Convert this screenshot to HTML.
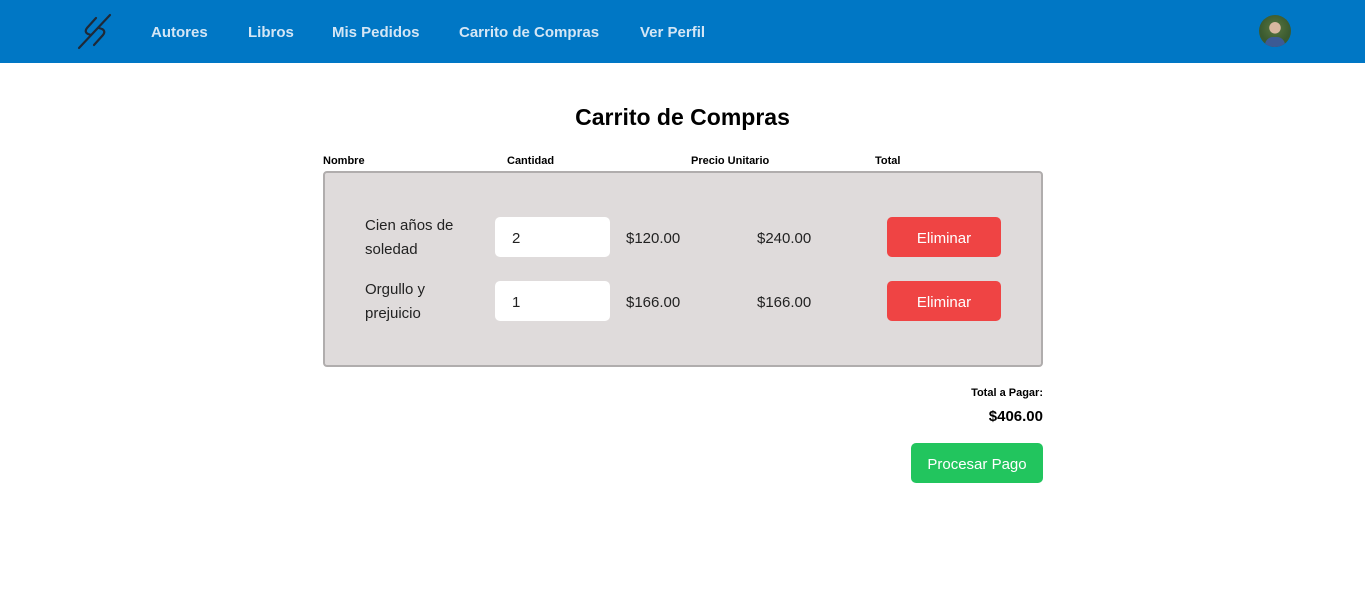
<!DOCTYPE html>
<html><head><meta charset="utf-8"><style>
*{margin:0;padding:0;box-sizing:border-box}
body{width:1365px;height:592px;background:#fff;font-family:"Liberation Sans",sans-serif;position:relative;overflow:hidden;color:#111}
.nav{position:absolute;left:0;top:0;width:1365px;height:63px;background:#0077c5}
.nav a{position:absolute;top:24px;color:#d4e6f5;font-weight:bold;font-size:15px;text-decoration:none}
.abs{position:absolute}
.h{position:absolute;top:155px;font-size:11px;font-weight:bold;color:#000}
.box{position:absolute;left:323px;top:171px;width:720px;height:196px;background:#dfdbdb;border:2px solid #b0adad;border-radius:4px}
.t{position:absolute;font-size:15px;color:#222;line-height:24px}
.inp{position:absolute;left:495px;width:115px;height:40px;background:#fff;border-radius:5px;font-size:15px;padding:13px 0 0 17px;color:#222}
.btn{position:absolute;color:#fff;font-size:15px;text-align:center;border-radius:5px;padding-top:3px}
</style></head><body>
<div class="nav">
<svg class="abs" style="left:76px;top:12px" width="38" height="38" viewBox="0 0 38 38" fill="none" stroke="#1f2937" stroke-width="2.2" stroke-linecap="round" stroke-linejoin="round">
<path d="M3 36 L34 3"/><path d="M20 6 L11 16 Q8 20 12 22 L15 23"/><path d="M18 33 L27 23 Q30 19 26 17 L23 16"/></svg>
<a style="left:151px">Autores</a><a style="left:248px">Libros</a><a style="left:332px">Mis Pedidos</a><a style="left:459px">Carrito de Compras</a><a style="left:640px">Ver Perfil</a>
<div class="abs" style="left:1259px;top:15px;width:32px;height:32px;border-radius:50%;background:radial-gradient(circle at 50% 40%,#d9b8a0 0 22%,#4d6b3a 24%,#3a5a2f 60%);overflow:hidden"><div class="abs" style="left:6px;top:22px;width:20px;height:12px;background:#3b5a95;border-radius:8px 8px 0 0"></div></div>
</div>
<div class="abs" style="left:0;width:1365px;top:104px;text-align:center;font-size:23px;font-weight:bold;color:#000">Carrito de Compras</div>
<div class="h" style="left:323px">Nombre</div><div class="h" style="left:507px">Cantidad</div><div class="h" style="left:691px">Precio Unitario</div><div class="h" style="left:875px">Total</div>
<div class="box"></div>
<div class="t" style="left:365px;top:214px">Cien años de<br>soledad</div>
<div class="inp" style="top:217px">2</div>
<div class="t" style="left:626px;top:227px">$120.00</div>
<div class="t" style="left:757px;top:227px">$240.00</div>
<div class="btn" style="left:887px;top:217px;width:114px;height:40px;line-height:37px;background:#ef4444">Eliminar</div>
<div class="t" style="left:365px;top:278px">Orgullo y<br>prejuicio</div>
<div class="inp" style="top:281px">1</div>
<div class="t" style="left:626px;top:291px">$166.00</div>
<div class="t" style="left:757px;top:291px">$166.00</div>
<div class="btn" style="left:887px;top:281px;width:114px;height:40px;line-height:37px;background:#ef4444">Eliminar</div>
<div class="abs" style="right:322px;top:387px;font-size:11px;font-weight:bold;color:#000">Total a Pagar:</div>
<div class="abs" style="right:322px;top:408px;font-size:15px;font-weight:bold;color:#000">$406.00</div>
<div class="btn" style="left:911px;top:443px;width:132px;height:40px;line-height:37px;background:#22c55e">Procesar Pago</div>
</body></html>
